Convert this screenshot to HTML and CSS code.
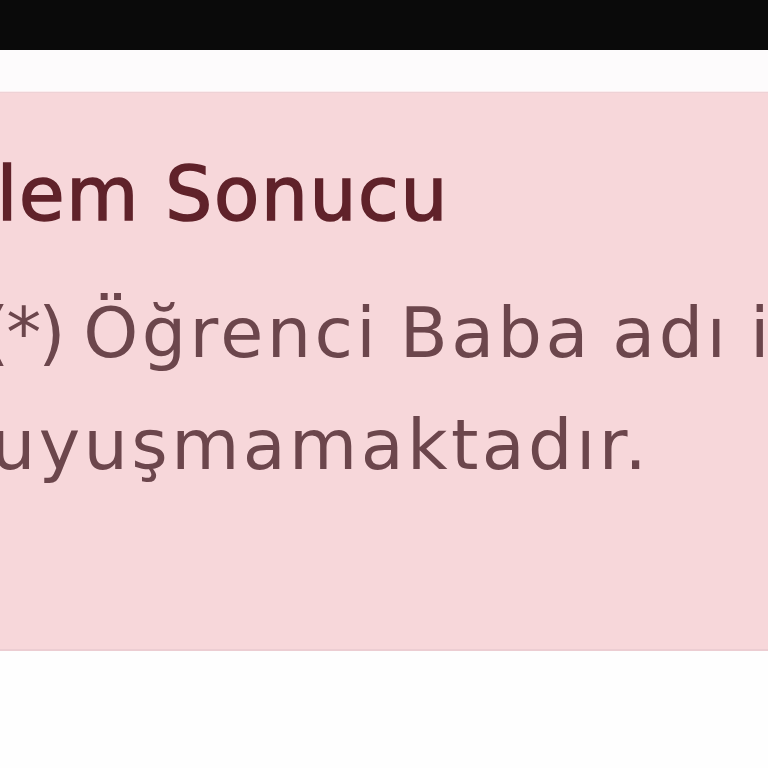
FILE: index.html
```html
<!DOCTYPE html>
<html lang="tr">
<head>
<meta charset="utf-8">
<link rel="stylesheet" href="styles.css">
</head>
<body>
<div class="topbar"></div>
<div class="gap"></div>
<div class="alert">
  <div class="inner">
    <h4 class="alert-title">İşlem Sonucu</h4>
    <p class="alert-text"><span class="mark">(*)</span> Öğrenci Baba adı ile nüfus bilgileri<br>uyuşmamaktadır.</p>
  </div>
</div>
<div class="footer-space"></div>
</body>
</html>
```
FILE: styles.css
```css
html, body {
  margin: 0;
  padding: 0;
  background: #fefefe;
  overflow: hidden;
  width: 768px;
  height: 768px;
}
.topbar {
  height: 50px;
  background: #0a0a0a;
}
.gap {
  height: 41px;
  background: #fdfbfc;
  border-bottom: 1px solid #fbeef0;
}
.alert {
  height: 556px;
  background: #f7d7da;
  border-top: 1px solid #eed2d6;
  border-bottom: 2px solid #eccdd2;
  overflow: hidden;
}
.inner {
  margin-left: -9px;
  padding-top: 57px;
  white-space: nowrap;
}
.alert-title {
  margin: 0 0 38px -58px;
  font-family: "DejaVu Sans", sans-serif;
  font-weight: 400;
  font-size: 74px;
  line-height: 89px;
  letter-spacing: 1.7px;
  color: #60222a;
  -webkit-text-stroke: 1.6px #60222a;
}
.alert-text {
  margin: 0;
  font-family: "DejaVu Sans", sans-serif;
  font-weight: 400;
  font-size: 70px;
  line-height: 112px;
  letter-spacing: 3.4px;
  word-spacing: -5px;
  color: #6c464c;
}
.mark {
  display: inline-block;
  margin-left: -9px;
  letter-spacing: -3px;
}
```
